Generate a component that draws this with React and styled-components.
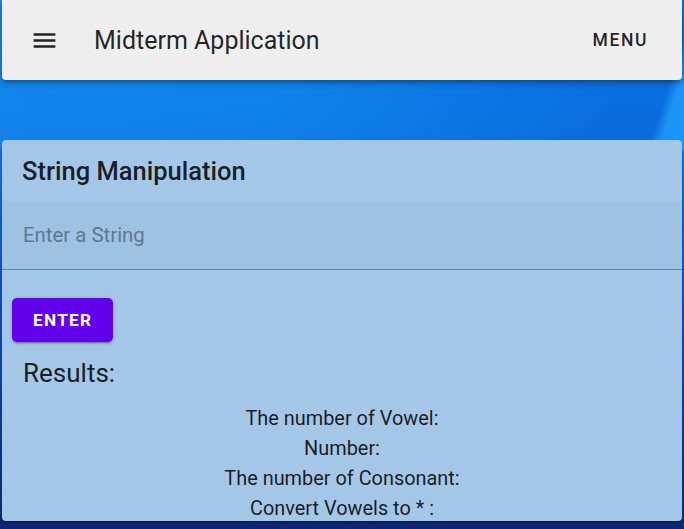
import React, { useState } from "react";
import styled, { createGlobalStyle } from "styled-components";

const GlobalStyle = createGlobalStyle`
  html, body {
    margin: 0;
    padding: 0;
    height: 100%;
  }
  body {
    font-family: Roboto, "Noto Sans", "Liberation Sans", sans-serif;
    background:
      linear-gradient(108deg, transparent 0%, transparent 95%, #1c93f6 96.5%, #1a96f8 100%) top / 100% 150px no-repeat,
      linear-gradient(90deg, rgba(30, 150, 245, 0.35) 0%, rgba(30, 150, 245, 0.25) 40%, rgba(5, 80, 210, 0.3) 90%) top / 100% 150px no-repeat,
      linear-gradient(180deg, #0c84ec 0%, #0b78e4 25%, #0d5fcf 42%, #1340a6 70%, #102a80 95%, #0f2572 100%);
    overflow: hidden;
  }
`;

export default function App() {
  const [text, setText] = useState("");

  return (
    <>
      <GlobalStyle />
      <Page>
        <AppBar>
          <NavButton aria-label="menu">
            <svg width="29" height="29" viewBox="0 0 24 24" fill="#222">
              <path d="M3 18h18v-2H3v2zm0-5h18v-2H3v2zm0-7v2h18V6H3z" />
            </svg>
          </NavButton>
          <Title>Midterm Application</Title>
          <Spacer />
          <TextButton>Menu</TextButton>
        </AppBar>

        <Card>
          <CardTitle>String Manipulation</CardTitle>
          <Field>
            <Input
              placeholder="Enter a String"
              value={text}
              onChange={e => setText(e.target.value)}
            />
          </Field>
          <Actions>
            <PrimaryButton>Enter</PrimaryButton>
          </Actions>
          <ResultsTitle>Results:</ResultsTitle>
          <ResultList>
            <ResultLine>The number of Vowel:</ResultLine>
            <ResultLine>Number:</ResultLine>
            <ResultLine>The number of Consonant:</ResultLine>
            <ResultLine>Convert Vowels to * :</ResultLine>
          </ResultList>
        </Card>
      </Page>
    </>
  );
}

const Page = styled.div`
  display: flex;
  flex-direction: column;
  gap: 60px;
  padding: 0 2px;
  height: 529px;
  box-sizing: border-box;
`;

const AppBar = styled.header`
  display: flex;
  align-items: center;
  flex-shrink: 0;
  height: 80px;
  padding: 0 20px 0 24px;
  background: #eeeeee;
  border-radius: 0 0 4px 4px;
  box-shadow: 0 2px 4px -1px rgba(0, 0, 0, 0.2), 0 4px 5px 0 rgba(0, 0, 0, 0.14),
    0 1px 10px 0 rgba(0, 0, 0, 0.12);
  box-sizing: border-box;
`;

const NavButton = styled.button`
  display: flex;
  align-items: center;
  justify-content: center;
  width: 36px;
  height: 36px;
  padding: 0;
  border: none;
  background: transparent;
  cursor: pointer;
`;

const Title = styled.div`
  margin-left: 32px;
  font-size: 25px;
  font-weight: 400;
  color: rgba(0, 0, 0, 0.87);
`;

const Spacer = styled.div`
  flex: 1;
`;

const TextButton = styled.button`
  border: none;
  background: transparent;
  padding: 8px 14px;
  font-family: inherit;
  font-size: 17.5px;
  font-weight: 500;
  letter-spacing: 1.6px;
  text-transform: uppercase;
  color: rgba(0, 0, 0, 0.87);
  cursor: pointer;
`;

const Card = styled.section`
  display: flex;
  flex-direction: column;
  flex-shrink: 0;
  height: 381px;
  background: #a5c7e7;
  border-radius: 4px;
  overflow: hidden;
  box-shadow: 0 2px 1px -1px rgba(0, 0, 0, 0.2), 0 1px 1px 0 rgba(0, 0, 0, 0.14),
    0 1px 3px 0 rgba(0, 0, 0, 0.12);
`;

const CardTitle = styled.h2`
  margin: 0;
  height: 61px;
  flex-shrink: 0;
  display: flex;
  align-items: center;
  padding: 0 20px;
  font-size: 25.5px;
  font-weight: 500;
  color: rgba(0, 0, 0, 0.87);
`;

const Field = styled.div`
  display: flex;
  align-items: center;
  flex-shrink: 0;
  height: 69px;
  background: rgba(0, 30, 80, 0.03);
  border-bottom: 1px solid #6e8299;
  box-sizing: border-box;
  padding: 0 21px;
`;

const Input = styled.input`
  width: 100%;
  border: none;
  outline: none;
  background: transparent;
  font-family: inherit;
  font-size: 20.4px;
  color: rgba(0, 0, 0, 0.87);
  padding: 0;
  &::placeholder {
    color: #5f7791;
  }
`;

const Actions = styled.div`
  display: flex;
  padding: 28px 10px 0;
`;

const PrimaryButton = styled.button`
  height: 44px;
  padding: 0 21px;
  border: none;
  border-radius: 5px;
  background: #6200ee;
  color: #ffffff;
  font-family: inherit;
  font-size: 17.2px;
  font-weight: 700;
  letter-spacing: 1.3px;
  text-transform: uppercase;
  box-shadow: 0 3px 1px -2px rgba(0, 0, 0, 0.2), 0 2px 2px 0 rgba(0, 0, 0, 0.14),
    0 1px 5px 0 rgba(0, 0, 0, 0.12);
  cursor: pointer;
`;

const ResultsTitle = styled.h3`
  margin: 16px 0 0;
  padding: 0 21px;
  font-size: 26px;
  line-height: 30px;
  font-weight: 400;
  color: rgba(0, 0, 0, 0.87);
`;

const ResultList = styled.div`
  display: flex;
  flex-direction: column;
  align-items: center;
  margin-top: 16px;
`;

const ResultLine = styled.div`
  font-size: 19.9px;
  line-height: 30px;
  color: rgba(0, 0, 0, 0.87);
`;
